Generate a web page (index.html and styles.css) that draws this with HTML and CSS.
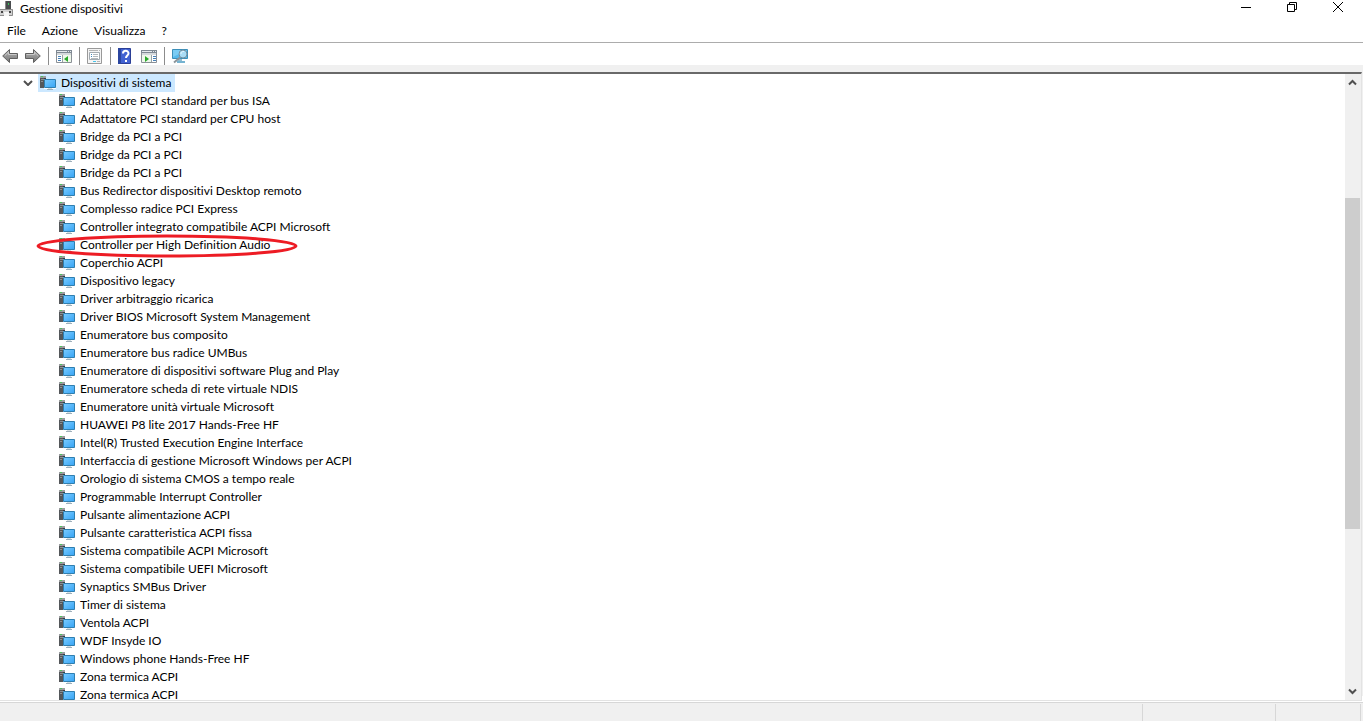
FILE: index.html
```
<!DOCTYPE html>
<html lang="it">
<head>
  <meta charset="UTF-8" />
  <title>Gestione dispositivi</title>
  <meta name="viewport" content="width=device-width, initial-scale=1.0" />
  <link rel="stylesheet" href="styles.css">
</head>
<body>

  <svg class="sprite" width="0" height="0" aria-hidden="true">
    <defs>
      <linearGradient id="screen" x1="0" y1="0" x2="1" y2="1">
        <stop offset="0" stop-color="#7accff" />
        <stop offset="1" stop-color="#36a3f5" />
      </linearGradient>
      <linearGradient id="metal" x1="0" y1="0" x2="0" y2="1">
        <stop offset="0" stop-color="#b5b5b5" />
        <stop offset="1" stop-color="#777777" />
      </linearGradient>
    </defs>
    <symbol id="device" viewBox="0 0 16 16">
      <path d="M0 1h6v2H0z" fill="#9b9d9f" />
      <path d="M1 1h2v1H1z" fill="#4fc35e" />
      <path d="M0 3h6v10H0z" fill="#54575a" />
      <path d="M4 3h2v10H4z" fill="#3a3c3e" />
      <path d="M1 4h3v1H1zM1 6h2v1H1z" fill="#8b9094" />
      <path d="M4 4h12v10H4z" fill="#ffffff" />
      <path d="M4.500 4.500h11v8h-11z" fill="url(#screen)" stroke="#2f7fb0" />
      <path d="M8 13h4v1H8z" fill="#d4dde2" />
      <path d="M7 14h6v1H7z" fill="#9fb0ba" />
    </symbol>
  </svg>

  <header class="title-bar">
    <svg class="app-icon" width="14" height="16" viewBox="0 0 14 16">
      <path d="M5 0h6v8H5z" fill="#4a4c4e" />
      <path d="M5 0h1v8H5z" fill="#8a8a8a" />
      <path d="M8 2h1v2H8z" fill="#38c759" />
      <path d="M0 8h13v7H0z" fill="#d2d2d2" />
      <path d="M0 8.500h12.500v6H0" fill="none" stroke="#8c8c8c" />
      <path d="M4 11h5v4H4z" fill="#f5f5f5" />
      <path d="M1 10h2v2H1zM9 10h2v2H9z" fill="#444444" />
    </svg>
    <h1>Gestione dispositivi</h1>
    <div class="window-buttons">
      <button aria-label="Riduci a icona"><svg width="12" height="12" viewBox="0 0 12 12"><path d="M1 6.500h10" /></svg></button>
      <button aria-label="Ripristino"><svg width="12" height="12" viewBox="0 0 12 12"><path d="M1.500 3.500h7v7h-7zM3.500 3.500v-2h7v7h-2" /></svg></button>
      <button aria-label="Chiudi"><svg width="12" height="12" viewBox="0 0 12 12"><path d="M1 1l10 10M11 1L1 11" /></svg></button>
    </div>
  </header>

  <nav class="menu-bar">
    <button>File</button>
    <button>Azione</button>
    <button>Visualizza</button>
    <button>?</button>
  </nav>

  <div class="toolbar">
    <button aria-label="Indietro">
      <svg width="16" height="16" viewBox="0 0 16 16"><path d="M.7 8l6.800-6.500v4h8v5h-8v4z" fill="url(#metal)" stroke="#606060" /><path d="M3 7.500l3.500-3.300v2.300h8" fill="none" stroke="#c9c9c9" /></svg>
    </button>
    <button aria-label="Avanti">
      <svg width="16" height="16" viewBox="0 0 16 16"><path d="M15.300 8L8.500 1.500v4h-8v5h8v4z" fill="url(#metal)" stroke="#606060" /><path d="M1.500 6.500h8V4.200L13 7.500" fill="none" stroke="#c9c9c9" /></svg>
    </button>
    <span class="separator"></span>
    <button aria-label="Mostra albero console">
      <svg width="16" height="16" viewBox="0 0 16 16">
        <path d="M.5 2.500h15v12H.5z" fill="#ffffff" stroke="#8a9096" />
        <path d="M0 2h16v3H0z" fill="#7f8993" />
        <path d="M1 3h10v1H1zM12 3h1v1h-1zM14 3h1v1h-1z" fill="#e6eaee" />
        <path d="M1 5h14v2H1z" fill="#d5d9dc" />
        <path d="M2 8h3v1H2zM2 10h3v1H2zM2 12h3v1H2z" fill="#4681b8" />
        <path d="M6 7h1v7H6z" fill="#9aa1a7" />
        <path d="M7 7h8v7H7z" fill="#eff8eb" />
        <path d="M12 8v6l-4-3z" fill="#29a829" />
      </svg>
    </button>
    <span class="separator"></span>
    <button aria-label="Proprietà">
      <svg width="16" height="16" viewBox="0 0 16 16">
        <path d="M.5.500h14v15H.5z" fill="#f4f4f4" stroke="#999999" />
        <path d="M2 2h9v1H2zM12 2h1v1h-1z" fill="#b5b5b5" />
        <path d="M2.500 4.500h10v7h-10z" fill="#ffffff" stroke="#a3aab0" />
        <path d="M4 6h1v1H4zM4 8h1v1H4z" fill="#3d87bd" />
        <path d="M6 6h5v1H6zM6 8h5v1H6zM4 10h7v1H4z" fill="#b3b8bc" />
        <path d="M6 13h3v1H6z" fill="#45c4e8" />
        <path d="M10 13h3v1h-3z" fill="#b5b5b5" />
      </svg>
    </button>
    <span class="separator"></span>
    <button aria-label="Guida">
      <svg width="16" height="16" viewBox="0 0 16 16">
        <path d="M.5.500h12v15H.5z" fill="#4161d2" stroke="#2b3f96" />
        <path d="M0 0h3v16H0z" fill="#2b459f" />
        <path d="M5 5.500C5 2 10.500 2 10.500 5.300c0 2.200-2.500 2.200-2.500 4.700M8 12v2" fill="none" stroke="#ffffff" stroke-width="2" />
      </svg>
    </button>
    <button aria-label="Mostra riquadro azioni">
      <svg width="16" height="16" viewBox="0 0 16 16">
        <path d="M.5 2.500h15v12H.5z" fill="#ffffff" stroke="#8a9096" />
        <path d="M0 2h16v3H0z" fill="#7f8993" />
        <path d="M1 3h10v1H1zM12 3h1v1h-1zM14 3h1v1h-1z" fill="#e6eaee" />
        <path d="M1 5h14v2H1z" fill="#d5d9dc" />
        <path d="M1 7h9v7H1z" fill="#eff8eb" />
        <path d="M4 8v6l4-3z" fill="#29a829" />
        <path d="M10 7h1v7h-1z" fill="#9aa1a7" />
        <path d="M12 8h3v1h-3zM12 10h3v1h-3zM12 12h3v1h-3z" fill="#4681b8" />
      </svg>
    </button>
    <span class="separator"></span>
    <button aria-label="Rileva modifiche hardware">
      <svg width="18" height="16" viewBox="0 0 18 16">
        <path d="M.5 1.500h15v9H.5z" fill="#55b9ec" stroke="#3c8fb9" />
        <path d="M1 2h14L1 9z" fill="#7accf4" />
        <path d="M6 11h4v2H6z" fill="#8fbdd2" />
        <path d="M5 13h8v2H5z" fill="#75b3d1" />
        <path d="M8 9.500L2 14.500" stroke="#8b949a" stroke-width="2" />
        <circle cx="11" cy="6" r="4" fill="#a9dcf5" stroke="#7590a0" />
        <path d="M9 6c0-2 1-2.500 3-2.500" fill="none" stroke="#e5f7ff" />
      </svg>
    </button>
  </div>

  <main class="content">
    <ul class="tree">
      <li>
        <div class="row root">
          <button class="toggle" aria-label="Comprimi"><svg width="10" height="6" viewBox="0 0 10 6"><path d="M1 1l4 4 4-4" /></svg></button>
          <span class="node selected"><svg class="icon"><use href="#device" /></svg>Dispositivi di sistema</span>
        </div>
        <ul class="children">
          <li class="row"><svg class="icon"><use href="#device" /></svg>Adattatore PCI standard per bus ISA</li>
          <li class="row"><svg class="icon"><use href="#device" /></svg>Adattatore PCI standard per CPU host</li>
          <li class="row"><svg class="icon"><use href="#device" /></svg>Bridge da PCI a PCI</li>
          <li class="row"><svg class="icon"><use href="#device" /></svg>Bridge da PCI a PCI</li>
          <li class="row"><svg class="icon"><use href="#device" /></svg>Bridge da PCI a PCI</li>
          <li class="row"><svg class="icon"><use href="#device" /></svg>Bus Redirector dispositivi Desktop remoto</li>
          <li class="row"><svg class="icon"><use href="#device" /></svg>Complesso radice PCI Express</li>
          <li class="row"><svg class="icon"><use href="#device" /></svg>Controller integrato compatibile ACPI Microsoft</li>
          <li class="row marked"><svg class="icon"><use href="#device" /></svg>Controller per High Definition Audio
            <svg class="mark" width="262" height="26" viewBox="0 0 262 26"><ellipse cx="131" cy="13" rx="129" ry="10" /></svg>
          </li>
          <li class="row"><svg class="icon"><use href="#device" /></svg>Coperchio ACPI</li>
          <li class="row"><svg class="icon"><use href="#device" /></svg>Dispositivo legacy</li>
          <li class="row"><svg class="icon"><use href="#device" /></svg>Driver arbitraggio ricarica</li>
          <li class="row"><svg class="icon"><use href="#device" /></svg>Driver BIOS Microsoft System Management</li>
          <li class="row"><svg class="icon"><use href="#device" /></svg>Enumeratore bus composito</li>
          <li class="row"><svg class="icon"><use href="#device" /></svg>Enumeratore bus radice UMBus</li>
          <li class="row"><svg class="icon"><use href="#device" /></svg>Enumeratore di dispositivi software Plug and Play</li>
          <li class="row"><svg class="icon"><use href="#device" /></svg>Enumeratore scheda di rete virtuale NDIS</li>
          <li class="row"><svg class="icon"><use href="#device" /></svg>Enumeratore unità virtuale Microsoft</li>
          <li class="row"><svg class="icon"><use href="#device" /></svg>HUAWEI P8 lite 2017 Hands-Free HF</li>
          <li class="row"><svg class="icon"><use href="#device" /></svg>Intel(R) Trusted Execution Engine Interface</li>
          <li class="row"><svg class="icon"><use href="#device" /></svg>Interfaccia di gestione Microsoft Windows per ACPI</li>
          <li class="row"><svg class="icon"><use href="#device" /></svg>Orologio di sistema CMOS a tempo reale</li>
          <li class="row"><svg class="icon"><use href="#device" /></svg>Programmable Interrupt Controller</li>
          <li class="row"><svg class="icon"><use href="#device" /></svg>Pulsante alimentazione ACPI</li>
          <li class="row"><svg class="icon"><use href="#device" /></svg>Pulsante caratteristica ACPI fissa</li>
          <li class="row"><svg class="icon"><use href="#device" /></svg>Sistema compatibile ACPI Microsoft</li>
          <li class="row"><svg class="icon"><use href="#device" /></svg>Sistema compatibile UEFI Microsoft</li>
          <li class="row"><svg class="icon"><use href="#device" /></svg>Synaptics SMBus Driver</li>
          <li class="row"><svg class="icon"><use href="#device" /></svg>Timer di sistema</li>
          <li class="row"><svg class="icon"><use href="#device" /></svg>Ventola ACPI</li>
          <li class="row"><svg class="icon"><use href="#device" /></svg>WDF Insyde IO</li>
          <li class="row"><svg class="icon"><use href="#device" /></svg>Windows phone Hands-Free HF</li>
          <li class="row"><svg class="icon"><use href="#device" /></svg>Zona termica ACPI</li>
          <li class="row"><svg class="icon"><use href="#device" /></svg>Zona termica ACPI</li>
        </ul>
      </li>
    </ul>
    <div class="scrollbar">
      <button aria-label="Scorri su"><svg width="9" height="7" viewBox="0 0 9 7"><path d="M1 5.500L4.500 2 8 5.500" /></svg></button>
      <div class="track"><div class="thumb"></div></div>
      <button aria-label="Scorri giù"><svg width="9" height="7" viewBox="0 0 9 7"><path d="M1 1.500L4.500 5 8 1.500" /></svg></button>
    </div>
  </main>

  <footer class="status-bar">
    <span class="status-main"></span>
    <span class="status-cell wide"></span>
    <span class="status-cell"></span>
  </footer>

</body>
</html>
```
FILE: styles.css
```
* {
  box-sizing: border-box;
}

body {
  display: flex;
  flex-direction: column;
  height: 100vh;
  margin: 0;
  overflow: hidden;
  background: #ffffff;
  color: #000000;
  font-family: "Segoe UI", Lato, "Open Sans", sans-serif;
  font-size: 12px;
  font-variant-ligatures: none;
  line-height: 18px;
}

button {
  display: flex;
  align-items: center;
  justify-content: center;
  padding: 0;
  border: none;
  background: none;
  color: inherit;
  font: inherit;
  font-variant-ligatures: none;
}

svg {
  display: block;
  flex: none;
}

ul {
  margin: 0;
  padding: 0;
  list-style: none;
}

.sprite {
  position: absolute;
}

.title-bar {
  display: flex;
  align-items: center;
  height: 18px;
  flex: none;
}

.title-bar h1 {
  flex: 1;
  margin: 0 0 0 6px;
  font-size: 12px;
  font-weight: normal;
}

.window-buttons {
  display: flex;
  height: 14px;
  align-self: flex-start;
  padding-right: 2px;
}

.window-buttons button {
  width: 46px;
}

.window-buttons path {
  fill: none;
  stroke: #000000;
}

.menu-bar {
  display: flex;
  gap: 16px;
  flex: none;
  height: 24px;
  padding: 2px 7px 0;
  align-items: center;
}

.toolbar {
  display: flex;
  align-items: center;
  gap: 7px;
  flex: none;
  height: 24px;
  padding: 4px 2px 0;
  border-top: 1px solid #acacac;
  border-bottom: 1px solid #d5d5d5;
}

.separator {
  width: 1px;
  height: 18px;
  background: #8c8c8c;
}

.content {
  display: flex;
  flex: 1;
  min-height: 0;
  margin-top: 6px;
  margin-right: 1px;
  border-top: 2px solid #696969;
  border-right: 1px solid #e3e3e3;
  border-bottom: 1px solid #e3e3e3;
  /* grey strip between the toolbar and the tree */
  box-shadow: 0 -6px 0 1px #f0f0f0;
}

.tree {
  flex: 1;
  overflow: hidden;
}

.row {
  display: flex;
  align-items: center;
  height: 18px;
  white-space: nowrap;
}

.root {
  padding-left: 23px;
}

.toggle {
  width: 10px;
  height: 18px;
  margin-right: 5px;
}

.toggle path,
.scrollbar path {
  fill: none;
  stroke: #505050;
  stroke-width: 2;
}

.node {
  display: flex;
  align-items: center;
  height: 18px;
  padding: 0 4px 0 2px;
}

.selected {
  background: #cce8ff;
}

.icon {
  width: 16px;
  height: 16px;
  margin-right: 5px;
}

.children {
  padding-left: 59px;
}

.marked {
  position: relative;
}

.mark {
  position: absolute;
  top: -3px;
  left: -23px;
  z-index: 1;
}

.mark ellipse {
  fill: none;
  stroke: #ed1c24;
  stroke-width: 3;
}

.scrollbar {
  display: flex;
  flex-direction: column;
  width: 16px;
  background: #f0f0f0;
}

.scrollbar button {
  height: 17px;
  padding-right: 1px;
}

.track {
  flex: 1;
}

.track::before {
  content: "";
  display: block;
  height: 18%;
}

.thumb {
  height: 56%;
  margin-right: 1px;
  background: #cdcdcd;
}

.status-bar {
  display: flex;
  flex: none;
  height: 19px;
  margin-top: 1px;
  padding-top: 1px;
  border-top: 1px solid #d7d7d7;
  background: #f0f0f0;
}

.status-main {
  flex: 1;
}

.status-main,
.status-cell {
  border-right: 1px solid #d7d7d7;
}

.status-cell {
  width: 85px;
  margin-right: 2px;
}

.status-cell.wide {
  width: 133px;
  margin-right: 0;
}
```
